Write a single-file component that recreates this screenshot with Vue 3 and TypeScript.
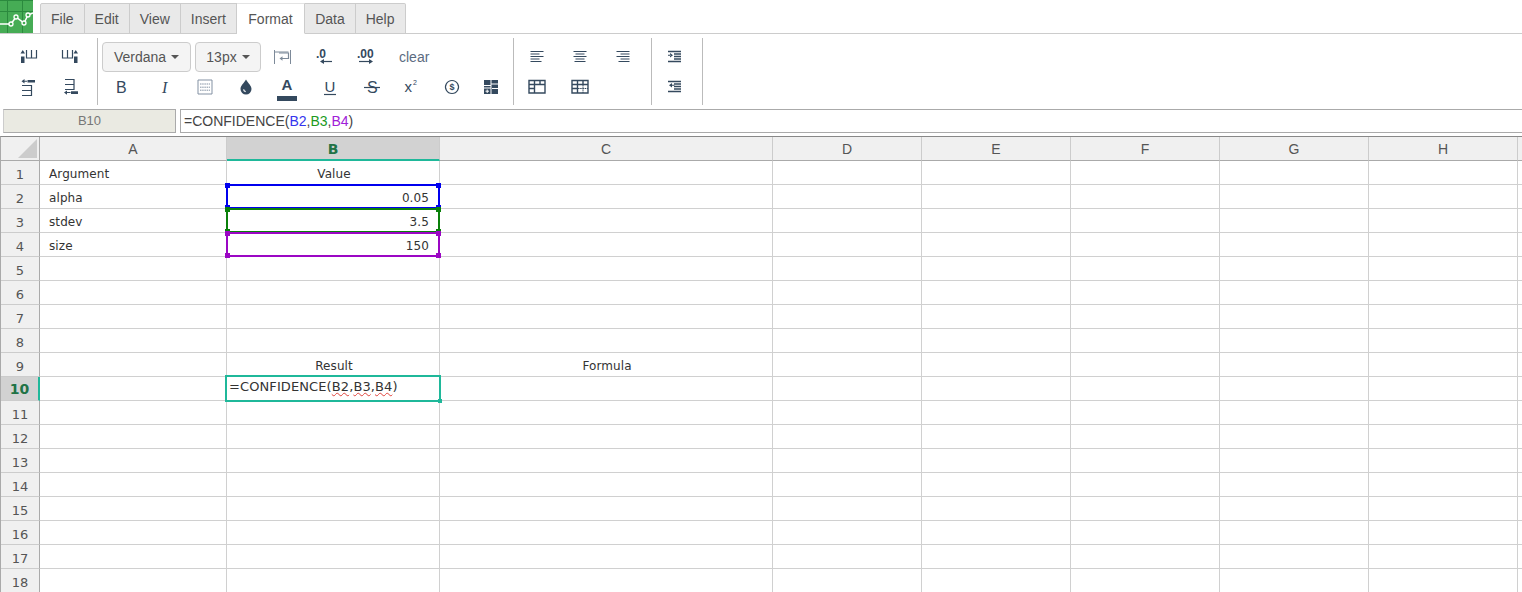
<script setup lang="ts">
interface Icon {
  s?: string
  f?: string
  thin?: string
  label?: string
  lx?: number
  ly?: number
  size?: number
  weight?: number
  family?: string
  italic?: boolean
  color?: string
  cls?: string
}

const tabs = ['File', 'Edit', 'View', 'Insert', 'Format', 'Data', 'Help']
const colWidths = [187, 213, 333, 149, 149, 149, 149, 149, 5]
const colNames = ['A', 'B', 'C', 'D', 'E', 'F', 'G', 'H', '']
const rowCount = 18

const cells: Record<string, { t: string; a?: string }> = {
  A1: { t: 'Argument' }, B1: { t: 'Value', a: 'center' },
  A2: { t: 'alpha' }, B2: { t: '0.05', a: 'right' },
  A3: { t: 'stdev' }, B3: { t: '3.5', a: 'right' },
  A4: { t: 'size' }, B4: { t: '150', a: 'right' },
  B9: { t: 'Result', a: 'center' }, C9: { t: 'Formula', a: 'center' },
}

const refs = [
  { top: 47, height: 25, color: '#0000ee' },
  { top: 71, height: 25, color: '#0a800a' },
  { top: 95, height: 25, color: '#9b06c4' },
]
const corners = ['tl', 'tr', 'bl', 'br']

const tI = (s: string, f: string): Icon => ({ s, f })
const insLeft = tI('M8.500 3v8h10V3M13.500 3v8', 'M3 9.500h3.500V16H3zM4.750 3 7 6.500H2.500z')
const insRight = tI('M2.500 3v8h10V3M7.500 3v8', 'M14 9.500h3.500V16H14zM15.750 3 18 6.500H13.500z')
const insUp = tI('M4 8.500h9.500v10H4M4 13.500h9.500', 'M9.500 3H17v2.600H9.500zM3.500 4.300l3-2.200v4.400zM6 3.800h3v1H6z')
const insDown = tI('M5 2.500h9v10H5M5 7.500h9', 'M11 14.300H18v2.600H11zM4 15.600l3-2.200v4.400zM6.500 15.100h4v1h-4z')

const row1a: Icon[] = [
  { s: 'M8 11.500h8.500V6H7', f: 'M7.500 11.500l3-2.300v4.600z', thin: 'M2.500 3v14M18.500 3v14M2.500 5h14', color: '#7d8a99' },
  { label: '.0', lx: 2, ly: 11, size: 12, weight: 700, family: 'Liberation Sans', s: 'M9 14.500h9', f: 'M6 14.500l4-2.500v5z' },
  { label: '.00', lx: 1, ly: 11, size: 12, weight: 700, family: 'Liberation Sans', s: 'M3 14.500h10', f: 'M17 14.500l-4-2.500v5z' },
]
const row2: Icon[] = [
  { label: 'B', lx: 5, ly: 15.500, size: 16, family: 'Liberation Sans' },
  { label: 'I', lx: 9, ly: 15.500, size: 16, family: 'Liberation Serif', italic: true },
  { thin: 'M3 3h14v14H3z', s: 'M5 7h10M5 10.200h10M5 13.200h10', color: '#8391a3' },
  { f: 'M10 2.500C8 6 4.500 8.600 4.500 12a5.500 5.500 0 0 0 11 0C15.500 8.600 12 6 10 2.500zM7 12.500a3.200 3.200 0 0 0 2.500 2.800l.3-1.200a2 2 0 0 1-1.600-1.800z', cls: 'drop' },
]
const row2b: Icon[] = [
  { label: 'U', lx: 4.500, ly: 14.500, size: 15, family: 'Liberation Sans', s: 'M4 17.500h12' },
  { label: 'S', lx: 5, ly: 15.500, size: 16, family: 'Liberation Sans', s: 'M2 10.500h16' },
  { label: 'x', lx: 3.500, ly: 15, size: 15, family: 'Liberation Sans', cls: 'sup' },
  { label: '$', lx: 7.500, ly: 13.200, size: 9, weight: 700, family: 'Liberation Sans', s: 'M10 3.500a6.500 6.500 0 1 0 .01 0z', cls: 'money' },
  { f: 'M3 3h6.500v5H3zM10.500 3H17v3.500h-6.500zM3 9h6.500v1.500H3zM10.500 7.500H17V17h-6.500zM3 11.500h6.500V17H3z', thin: 'M4.500 14.200h3.500M6.200 12.500v3.500M11 11.500h6', cls: 'blocks' },
]
const align = (a: number[], right = false, center = false): Icon => {
  const d = a.map((w, i) => {
    const x = right ? 16.500 - w : center ? 10 - w / 2 : 3.500
    return `M${x} ${4.500 + i * 2.500}h${w}`
  }).join('')
  return { s: d }
}
const row1c: Icon[] = [
  align([13, 9, 13, 9, 11]),
  align([13, 9, 13, 9, 11], false, true),
  align([13, 9, 13, 9, 11], true),
]
const tableA = 'M2 3.500h16v12.500H2zM2 7.500h16M7.500 3.500V16M13 3.500v4M2 11.500h5.500'
const tableB = 'M2 3.500h16v12.500H2zM2 7.500h16M7.500 3.500V16M13 3.500v4M2 11.500h5.500'
const tableBDots = 'M8 11.500h10M13 8v8'
const indentLines = 'M3 4.500h13M9 7h7M9 9.500h7M9 12h7M3 14.500h13'
const indentA = 'M8 8.200l-3-2.200v4.400zM3 7.700h2.500v1H3z'
const indentB = 'M4 8.200l3-2.200v4.400zM7 7.700h2.500v1H7z'
const col1: Icon[] = [insLeft, insRight, insUp, insDown]

function cell(col: string, row: number) {
  return cells[`${col}${row}`]
}
</script>

<template>
  <div class="app">
    <header class="menubar">
      <svg class="logo" viewBox="0 0 33 33" width="33" height="33">
        <rect width="33" height="33" fill="#46ac55" />
        <path d="M0 .500h33M0 11.500h33M7.500 0v33M22.500 0v33" stroke="#2b8a3e" fill="none" />
        <path d="M0 24h11l5-7 8 6 4-8 5-2" stroke="#fff" stroke-width="1.500" fill="none" />
        <circle cx="11" cy="24" r="2" fill="#46ac55" stroke="#fff" stroke-width="1.300" />
        <circle cx="16" cy="17" r="2" fill="#46ac55" stroke="#fff" stroke-width="1.300" />
        <circle cx="24" cy="23" r="2" fill="#46ac55" stroke="#fff" stroke-width="1.300" />
        <circle cx="28" cy="15" r="2" fill="#46ac55" stroke="#fff" stroke-width="1.300" />
      </svg>
      <nav class="tabs">
        <span v-for="t in tabs" :key="t" class="tab" :class="{ active: t === 'Format' }">{{ t }}</span>
      </nav>
    </header>

    <section class="toolbar">
      <div class="group g1">
        <span v-for="(ic, i) in col1" :key="i" class="ib">
          <svg viewBox="0 0 20 20" width="20" height="20">
            <path v-if="ic.s" :d="ic.s" class="st" />
            <path v-if="ic.f" :d="ic.f" class="fl" />
          </svg>
        </span>
      </div>

      <div class="group g2">
        <div class="line top">
          <button class="sel font">Verdana <i class="caret" /></button>
          <button class="sel size">13px <i class="caret" /></button>
          <span v-for="(ic, i) in row1a" :key="i" class="ib">
            <svg viewBox="0 0 20 20" width="20" height="20">
              <path v-if="ic.thin" :d="ic.thin" class="st thin" :style="{ stroke: ic.color }" />
              <path v-if="ic.s" :d="ic.s" class="st" :style="{ stroke: ic.color }" />
              <path v-if="ic.f" :d="ic.f" class="fl" :style="{ fill: ic.color }" />
              <text v-if="ic.label" :x="ic.lx" :y="ic.ly" :font-size="ic.size" :font-weight="ic.weight" :font-family="ic.family" class="lb">{{ ic.label }}</text>
            </svg>
          </span>
          <span class="clear">clear</span>
        </div>
        <div class="line bottom">
          <span v-for="(ic, i) in row2" :key="i" class="ib" :class="ic.cls">
            <svg viewBox="0 0 20 20" width="20" height="20">
              <path v-if="ic.thin" :d="ic.thin" class="st thin" :style="{ stroke: ic.color }" />
              <path v-if="ic.s" :d="ic.s" class="st dash" :style="{ stroke: ic.color }" />
              <path v-if="ic.f" :d="ic.f" class="fl" fill-rule="evenodd" />
              <text v-if="ic.label" :x="ic.lx" :y="ic.ly" :font-size="ic.size" :font-family="ic.family" :font-style="ic.italic ? 'italic' : 'normal'" class="lb">{{ ic.label }}</text>
            </svg>
          </span>
          <span class="ib color-a">
            <span class="glyph-a">A</span>
            <i class="color-bar" />
          </span>
          <span v-for="(ic, i) in row2b" :key="'b' + i" class="ib" :class="ic.cls">
            <svg viewBox="0 0 20 20" width="20" height="20">
              <path v-if="ic.f" :d="ic.f" class="fl" />
              <path v-if="ic.thin" :d="ic.thin" class="st thin white" />
              <path v-if="ic.s" :d="ic.s" class="st" />
              <text v-if="ic.label" :x="ic.lx" :y="ic.ly" :font-size="ic.size" :font-weight="ic.weight" :font-family="ic.family" class="lb">{{ ic.label }}</text>
              <text v-if="ic.label === 'x'" x="12" y="8" font-size="7" font-family="Liberation Sans" class="lb">2</text>
            </svg>
          </span>
        </div>
      </div>

      <div class="group g3">
        <span v-for="(ic, i) in row1c" :key="i" class="ib">
          <svg viewBox="0 0 20 20" width="20" height="20"><path :d="ic.s" class="st" /></svg>
        </span>
        <span class="ib"><svg viewBox="0 0 20 20" width="20" height="20"><path :d="tableA" class="st bold" /></svg></span>
        <span class="ib">
          <svg viewBox="0 0 20 20" width="20" height="20">
            <path :d="tableB" class="st bold" />
            <path :d="tableBDots" class="st dash" />
          </svg>
        </span>
      </div>

      <div class="group g4">
        <span class="ib"><svg viewBox="0 0 20 20" width="20" height="20"><path :d="indentLines" class="st bold" /><path :d="indentA" class="fl" /></svg></span>
        <span class="ib"><svg viewBox="0 0 20 20" width="20" height="20"><path :d="indentLines" class="st bold" /><path :d="indentB" class="fl" /></svg></span>
      </div>
    </section>

    <section class="formula">
      <div class="namebox">B10</div>
      <div class="input">=CONFIDENCE(<span class="c1">B2</span>,<span class="c2">B3</span>,<span class="c3">B4</span>)</div>
    </section>

    <section class="sheet">
      <div class="head-row">
        <div class="corner"><i /></div>
        <div
          v-for="(n, i) in colNames"
          :key="i"
          class="col-head"
          :class="{ on: n === 'B' }"
          :style="{ width: colWidths[i] + 'px' }"
        >{{ n }}</div>
      </div>
      <div v-for="r in rowCount" :key="r" class="row">
        <div class="row-head" :class="{ on: r === 10 }">{{ r }}</div>
        <div
          v-for="(n, i) in colNames"
          :key="i"
          class="cell"
          :class="cell(n, r)?.a"
          :style="{ width: colWidths[i] + 'px' }"
        >{{ cell(n, r)?.t }}</div>
      </div>

      <div
        v-for="(b, i) in refs"
        :key="i"
        class="ref"
        :style="{ top: b.top + 'px', height: b.height + 'px', borderColor: b.color }"
      >
        <i v-for="c in corners" :key="c" class="handle" :class="c" :style="{ background: b.color }" />
      </div>

      <div class="editor">=CONFIDENCE(<u>B2</u>,<u>B3</u>,<u>B4</u>)<i /></div>
    </section>
  </div>
</template>

<style>
html, body { margin: 0; padding: 0; background: #fff; overflow: hidden; }
</style>

<style scoped>
.app {
  width: 1522px;
  height: 592px;
  overflow: hidden;
  background: #fff;
  font-family: "Liberation Sans", Arial, sans-serif;
  color: #555;
}
.menubar {
  display: flex;
  height: 34px;
  box-sizing: border-box;
  border-bottom: 1px solid #ccc;
}
.logo { display: block; flex: none; }
.tabs { display: flex; margin: 3px 0 -1px 7px; }
.tab {
  box-sizing: border-box;
  height: 31px;
  line-height: 31px;
  padding: 0 10px;
  font-size: 14px;
  background: #e9e9e9;
  border: 1px solid #ccc;
  border-left-width: 0;
  color: #555;
}
.tab:first-child { border-left-width: 1px; border-radius: 2px 0 0 0; }
.tab:last-child { border-radius: 0 2px 0 0; }
.tab.active { background: #fff; border-bottom-color: #fff; border-top-color: #e4e4e4; padding: 0 11.500px; }

.toolbar {
  display: flex;
  height: 75px;
  box-sizing: border-box;
  padding-top: 4px;
}
.group {
  height: 67px;
  box-sizing: border-box;
  border-right: 1px solid #bbb;
  flex: none;
}
.st { fill: none; stroke: #34495e; stroke-width: 1.200; }
.st.thin { stroke-width: 1; }
.st.bold { stroke-width: 1.400; }
.st.white { stroke: #fff; }
.st.dash { stroke-dasharray: 1.500 .700; stroke-width: 1; }
.fl { fill: #34495e; }
.lb { fill: #34495e; }
.ib {
  width: 42px;
  height: 30px;
  display: flex;
  align-items: center;
  justify-content: center;
  flex: none;
}
.drop { margin-right: -1px; margin-left: -1px; }
.sup { margin-left: -3px; }
.money { margin-left: -1px; }
.blocks { margin-left: -3px; }
.g1 {
  width: 98px;
  padding: 0 7px;
  display: grid;
  grid-template-columns: 42px 42px;
  grid-auto-rows: 30px;
  align-content: center;
  gap: 0;
}
.g2 { width: 416px; padding-top: 4px; }
.line { display: flex; align-items: center; height: 30px; padding-left: 4px; }
.line.bottom { padding-left: 2px; }
.sel {
  box-sizing: border-box;
  height: 30px;
  padding: 0;
  font: 14px "Liberation Sans", Arial, sans-serif;
  color: #555;
  background: #f4f4f4;
  border: 1px solid #ccc;
  border-radius: 4px;
  display: flex;
  align-items: center;
  justify-content: center;
  gap: 5px;
}
.font { width: 89px; margin-right: 4px; }
.size { width: 66px; }
.caret {
  width: 0;
  height: 0;
  border: 4px solid transparent;
  border-top-color: #555;
  border-bottom-width: 0;
}
.clear { margin-left: 12px; font-size: 14px; color: #5b6b7f; }
.color-a { flex-direction: column; justify-content: flex-start; margin-right: 1px; }
.glyph-a { font-size: 15px; font-weight: 700; color: #34495e; line-height: 17px; margin-top: 4px; }
.color-bar { width: 20px; height: 5px; background: #34495e; margin-top: 3px; }
.g3 {
  width: 138px;
  padding-left: 2px;
  display: grid;
  grid-template-columns: repeat(3, 43px);
  grid-auto-rows: 30px;
  align-content: center;
}
.g4 {
  width: 51px;
  padding-right: 4px;
  display: flex;
  flex-direction: column;
  align-items: center;
  justify-content: center;
}

.formula {
  display: flex;
  height: 24px;
  padding-left: 3px;
}
.namebox {
  width: 173px;
  box-sizing: border-box;
  background: #eaeae2;
  border: 1px solid #aaa;
  border-left-color: #ccc;
  font-size: 13px;
  line-height: 22px;
  text-align: center;
  color: #777;
}
.input {
  flex: 1;
  margin-left: 4px;
  padding-left: 3px;
  box-sizing: border-box;
  border: 1px solid #aaa;
  border-right: 0;
  font-size: 14px;
  line-height: 22px;
  color: #444;
}
.c1 { color: #3535ee; }
.c2 { color: #1d9a1d; }
.c3 { color: #a020d8; }

.sheet {
  position: relative;
  margin-top: 3px;
  border-top: 1px solid #888;
  border-left: 1px solid #aaa;
  font-family: "DejaVu Sans", Verdana, sans-serif;
  font-size: 12px;
  letter-spacing: .1px;
  color: #333;
}
.head-row, .row { display: flex; height: 24px; }
.corner {
  width: 39px;
  box-sizing: border-box;
  background: #f0f0f0;
  border-right: 1px solid #aaa;
  border-bottom: 1px solid #aaa;
  flex: none;
  padding: 2px 2px 2px 17px;
}
.corner i {
  display: block;
  width: 0;
  height: 0;
  border-left: 19px solid transparent;
  border-bottom: 19px solid #ccc;
}
.col-head {
  box-sizing: border-box;
  flex: none;
  background: #f0f0f0;
  border-right: 1px solid #ccc;
  border-bottom: 1px solid #aaa;
  text-align: center;
  font: 14px/25px "Liberation Sans", Arial, sans-serif;
  letter-spacing: 0;
  color: #555;
}
.col-head.on {
  background: #d2d2d2;
  border-bottom: 2px solid #1fb89a;
  color: #217346;
  font: bold 14px/25px "DejaVu Sans", Verdana, sans-serif;
}
.row-head {
  width: 39px;
  box-sizing: border-box;
  flex: none;
  background: #f0f0f0;
  border-right: 1px solid #aaa;
  border-bottom: 1px solid #ccc;
  text-align: center;
  font-size: 13px;
  line-height: 27px;
  letter-spacing: 0;
  color: #555;
}
.row-head.on {
  background: #d2d2d2;
  border-right: 2px solid #1fb89a;
  color: #217346;
  font-weight: 700;
  font-size: 14px;
  line-height: 25px;
}
.cell {
  box-sizing: border-box;
  flex: none;
  border-right: 1px solid #d0d0d0;
  border-bottom: 1px solid #d0d0d0;
  padding: 0 10px 0 9px;
  line-height: 27px;
  white-space: nowrap;
  overflow: hidden;
}
.cell.center { text-align: center; padding: 0 9px 0 11px; }
.cell.right { text-align: right; }
.ref {
  position: absolute;
  left: 225px;
  width: 214px;
  box-sizing: border-box;
  border: 2px solid;
}
.handle { position: absolute; width: 5px; height: 5px; }
.tl { left: -3px; top: -3px; }
.tr { right: -3px; top: -3px; }
.bl { left: -3px; bottom: -3px; }
.br { right: -3px; bottom: -3px; }
.editor {
  position: absolute;
  left: 224px;
  top: 238px;
  width: 216px;
  height: 27px;
  box-sizing: border-box;
  border: 2px solid #1fb89a;
  background: #fff;
  padding-left: 2px;
  font-size: 13px;
  letter-spacing: .1px;
  line-height: 20px;
  color: #333;
  white-space: nowrap;
}
.editor u { text-decoration: underline wavy #e0433c; text-decoration-thickness: 1px; text-underline-offset: 1px; }
.editor i {
  position: absolute;
  right: -3px;
  bottom: -3px;
  width: 4px;
  height: 4px;
  background: #1fb89a;
}
</style>
